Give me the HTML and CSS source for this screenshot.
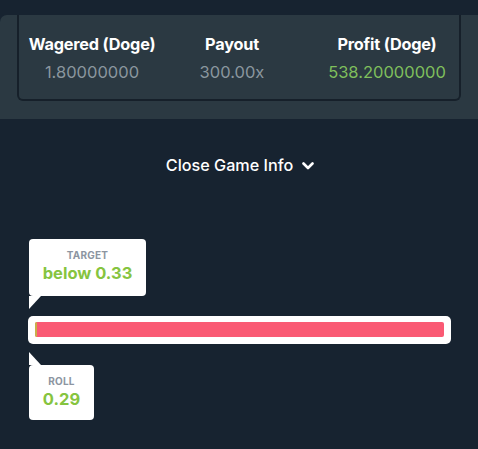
FILE: index.html
```html
<!DOCTYPE html>
<html>
<head>
<meta charset="utf-8">
<link rel="stylesheet" href="styles.css">
</head>
<body>
<div class="panel">
  <div class="card">
    <div class="col">
      <div class="label">Wagered (Doge)</div>
      <div class="value">1.80000000</div>
    </div>
    <div class="col col-mid">
      <div class="label">Payout</div>
      <div class="value">300.00x</div>
    </div>
    <div class="col">
      <div class="label">Profit (Doge)</div>
      <div class="value value-green">538.20000000</div>
    </div>
  </div>
</div>
<div class="toggle">
  <span>Close Game Info</span>
  <svg class="chev" width="12" height="8" viewBox="0 0 12 8"><path d="M1.5 1.5 L6 6 L10.5 1.5" fill="none" stroke="#ffffff" stroke-width="2.6" stroke-linecap="round" stroke-linejoin="round"/></svg>
</div>
<div class="game">
  <div class="tip tip-target">
    <div class="tip-label">TARGET</div>
    <div class="tip-value">below 0.33</div>
  </div>
  <div class="tail tail-down"></div>
  <div class="track">
    <div class="bar"><div class="win"></div></div>
  </div>
  <div class="tail tail-up"></div>
  <div class="tip tip-roll">
    <div class="tip-label">ROLL</div>
    <div class="tip-value">0.29</div>
  </div>
</div>
</body>
</html>
```
FILE: styles.css
```css
html, body {
  margin: 0;
  padding: 0;
}
body {
  background: #172330;
  width: 478px;
  height: 449px;
  overflow: hidden;
  font-family: Inter, "Noto Sans", sans-serif;
  padding-top: 15px;
  box-sizing: border-box;
}
.panel {
  background: #2b3942;
  border-top-left-radius: 7px;
  padding: 0 17px 18px 17px;
}
.card {
  height: 86px;
  box-sizing: border-box;
  border: 2px solid #16202a;
  border-top: none;
  border-radius: 0 0 6px 6px;
  display: grid;
  grid-template-columns: 146px 150px 1fr;
  padding-top: 19px;
}
.col {
  text-align: center;
}
.col-mid {
  padding-right: 16px;
}
.label {
  color: #ffffff;
  font-weight: 700;
  font-size: 16.3px;
  line-height: 20px;
  letter-spacing: -0.2px;
}
.value {
  color: #8a969e;
  font-size: 16.5px;
  line-height: 20px;
  margin-top: 8px;
}
.value-green {
  color: #7fbf5c;
}
.toggle {
  display: flex;
  align-items: center;
  justify-content: center;
  gap: 9px;
  height: 20px;
  margin-top: 36px;
  color: #ffffff;
  font-size: 16.2px;
  font-weight: 500;
  padding-left: 2px;
}
.chev {
  display: block;
  margin-top: 1px;
}
.game {
  padding: 0 27px 0 28px;
  margin-top: 64px;
}
.tip {
  background: #ffffff;
  border-radius: 4px;
  text-align: center;
  box-sizing: border-box;
  margin-left: 1px;
}
.tip-target {
  width: 117px;
  height: 57px;
  padding-top: 10px;
}
.tip-roll {
  width: 65px;
  height: 55px;
  padding-top: 10px;
}
.tip-label {
  color: #8c95a1;
  font-size: 10px;
  font-weight: 700;
  line-height: 12px;
  letter-spacing: 0.2px;
}
.tip-value {
  color: #86c43f;
  font-size: 16.5px;
  font-weight: 700;
  line-height: 22px;
  margin-top: 1px;
}
.tail {
  width: 0;
  height: 0;
  margin-left: 1px;
}
.tail-down {
  border-top: 13px solid #ffffff;
  border-right: 12px solid transparent;
}
.tail-up {
  border-bottom: 13px solid #ffffff;
  border-right: 12px solid transparent;
  margin-top: 8px;
}
.track {
  margin-top: 7px;
  background: #ffffff;
  border-radius: 5px;
  height: 28px;
  padding: 6px 7px 7px 7px;
  box-sizing: border-box;
}
.bar {
  height: 15px;
  background: #fa5a74;
  border-radius: 2px;
  position: relative;
  overflow: hidden;
}
.win {
  width: 2px;
  height: 100%;
  background: #c9b04a;
}
```
